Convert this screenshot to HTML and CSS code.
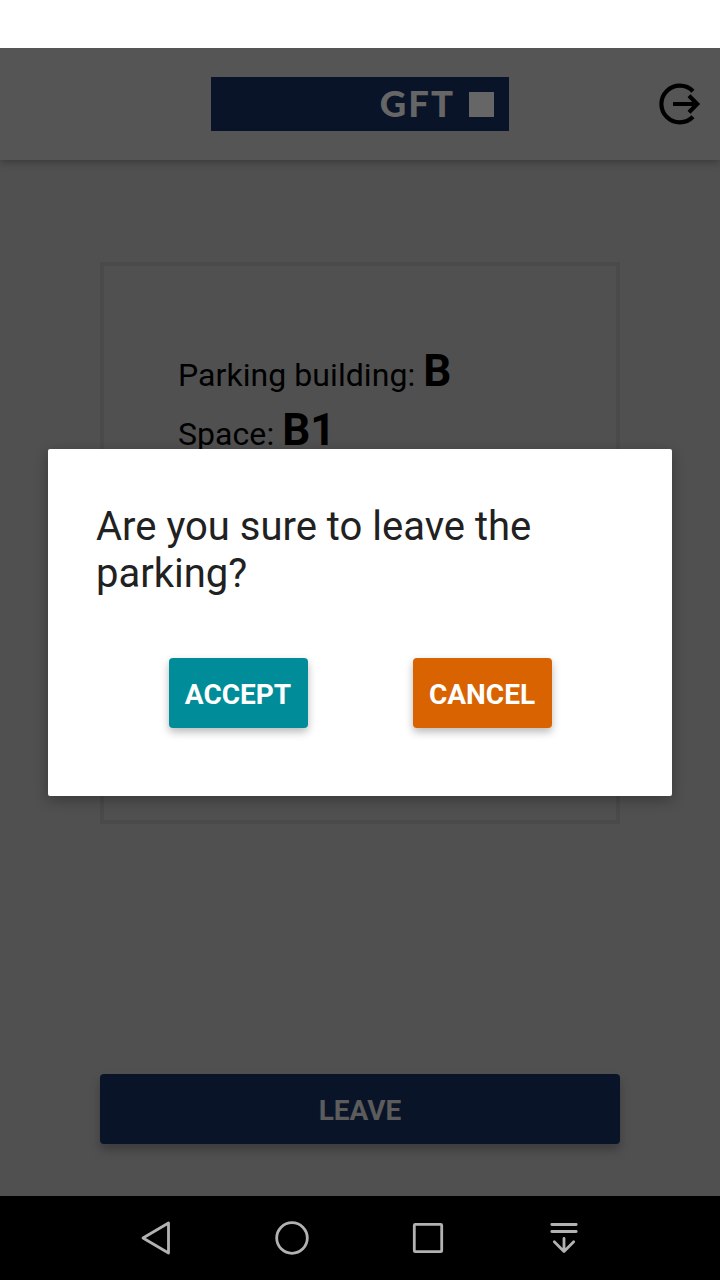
FILE: index.html
```html
<!DOCTYPE html>
<html lang="en">
<head>
<meta charset="utf-8">
<title>Parking</title>
<link rel="stylesheet" href="styles.css">
</head>
<body>
<div class="screen">
  <div class="status-bar"></div>
  <header class="toolbar">
    <div class="logo"><span class="logo-text">GFT</span><span class="logo-square"></span></div>
    <svg class="logout" width="48" height="48" viewBox="0 0 48 48" fill="none" stroke="#000" stroke-width="4.2">
      <path d="M37 11.2A18.4 18.4 0 1 0 37 36.8"/>
      <path d="M17 24H41M33 15.7L41.2 24L33 32.3"/>
    </svg>
  </header>
  <main class="content">
    <section class="card">
      <p class="row"><span class="label">Parking building:&nbsp;</span><strong class="value">B</strong></p>
      <p class="row"><span class="label">Space:&nbsp;</span><strong class="value">B1</strong></p>
    </section>
    <button class="leave">LEAVE</button>
  </main>
  <nav class="nav-bar">
    <svg class="nav-icon" width="40" height="40" viewBox="0 0 40 40"><path d="M32.5 5V35L7 20Z"/></svg>
    <svg class="nav-icon" width="40" height="40" viewBox="0 0 40 40"><circle cx="20" cy="20" r="15.3"/></svg>
    <svg class="nav-icon" width="40" height="40" viewBox="0 0 40 40"><rect x="6.3" y="6.3" width="27.4" height="27.4" rx="1"/></svg>
    <svg class="nav-icon" width="40" height="40" viewBox="0 0 40 40"><path d="M7.8 6.5H32.2M7.8 13.5H32.2M20 20.5V33M10.3 23.8L20 33.5L29.7 23.8"/></svg>
  </nav>
  <div class="dialog" role="dialog">
    <h1 class="dialog-title">Are you sure to leave the parking?</h1>
    <div class="actions">
      <button class="button accept">ACCEPT</button>
      <button class="button cancel">CANCEL</button>
    </div>
  </div>
</div>
</body>
</html>
```

FILE: styles.css
```css
* { box-sizing: border-box; }
body { margin: 0; font-family: Roboto, sans-serif; }
.screen {
  position: relative;
  display: flex;
  flex-direction: column;
  width: 720px;
  height: 1280px;
  overflow: hidden;
  background: #505050;
}
.status-bar {
  position: relative;
  z-index: 1;
  height: 48px;
  background: #fff;
}
.toolbar {
  display: grid;
  grid-template-columns: 1fr 298px 1fr;
  align-items: center;
  height: 112px;
  background: #555;
  box-shadow: 0 2px 8px rgba(0, 0, 0, 0.3);
}
.logo {
  grid-column: 2;
  display: flex;
  align-items: center;
  justify-content: flex-end;
  gap: 14px;
  height: 54px;
  padding-right: 15px;
  background: #0a1429;
}
.logo-text {
  height: 54px;
  font: 900 36.5px/53px Lato, sans-serif;
  letter-spacing: 2px;
  color: #666;
}
.logo-square { width: 25px; height: 25px; background: #666; }
.logout { justify-self: end; margin-right: 16px; }
.content {
  flex: 1;
  display: flex;
  flex-direction: column;
  justify-content: space-between;
  padding: 102px 100px 52px;
}
.card {
  height: 562px;
  padding: 76px 74px;
  border: 4px solid #4a4a4a;
  color: #000;
}
.row {
  display: flex;
  align-items: baseline;
  height: 58.5px;
  margin: 0;
  line-height: 59px;
}
.label { font-size: 32px; letter-spacing: 0.06px; }
.value { font-size: 44px; }
.leave {
  height: 70px;
  padding: 2px 0 0;
  border: 0;
  border-radius: 4px;
  background: #0a1429;
  box-shadow: 0 6px 10px rgba(0, 0, 0, 0.25);
  color: #5c5c5c;
  font: bold 28px Roboto, sans-serif;
}
.nav-bar {
  display: flex;
  align-items: center;
  justify-content: center;
  gap: 96px;
  height: 84px;
  background: #000;
}
.nav-icon {
  fill: none;
  stroke: #b2b2b2;
  stroke-width: 2.8;
  stroke-linecap: round;
  stroke-linejoin: round;
}
.dialog {
  position: absolute;
  top: 449px;
  left: 48px;
  width: 624px;
  height: 347px;
  padding: 54px 48px 0;
  border-radius: 2px;
  background: #fff;
  box-shadow: 0 4px 14px rgba(0, 0, 0, 0.3);
}
.dialog-title {
  margin: 0;
  color: #212121;
  font-size: 40px;
  font-weight: 400;
  line-height: 47px;
}
.actions {
  display: flex;
  justify-content: center;
  gap: 105px;
  margin-top: 61px;
}
.button {
  width: 139px;
  height: 70px;
  padding: 2px 0 0;
  border: 0;
  border-radius: 4px;
  box-shadow: 0 4px 8px rgba(0, 0, 0, 0.28);
  color: #fff;
  font: bold 28px Roboto, sans-serif;
}
.accept { background: #008c99; }
.cancel { background: #d86300; }
```
